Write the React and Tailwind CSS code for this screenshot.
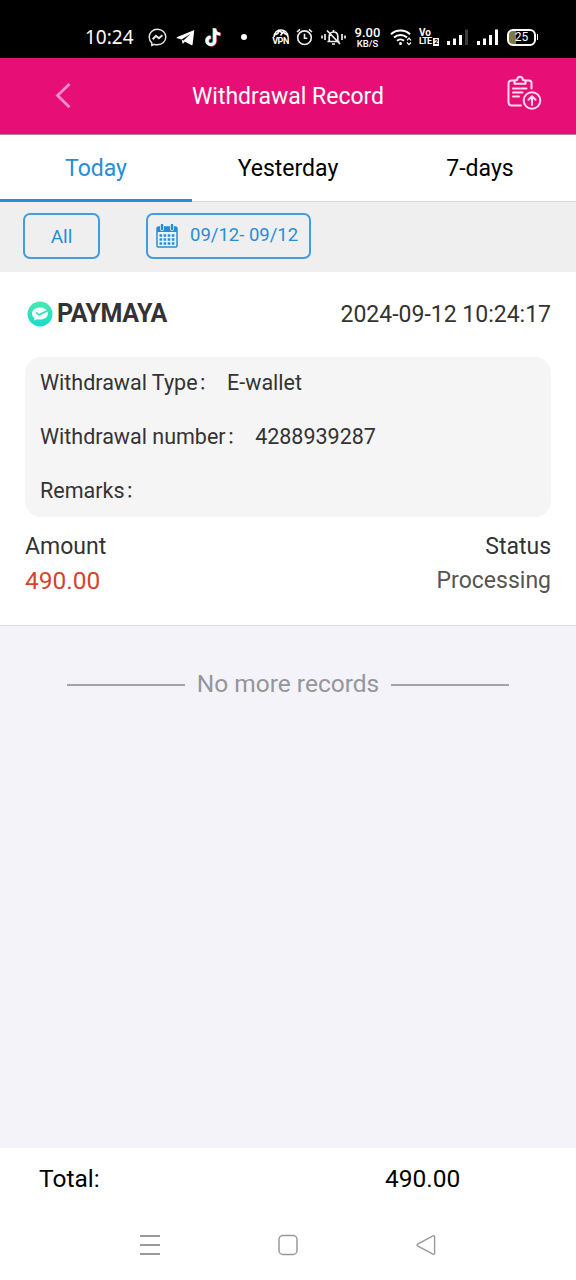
import React from "react";

const tabs = ["Today", "Yesterday", "7-days"];

const details = [
  { label: "Withdrawal Type", value: "E-wallet" },
  { label: "Withdrawal number", value: "4288939287" },
  { label: "Remarks", value: "" },
];

const MessengerIcon = () => (
  <svg className="ml-[14px] h-[19px] w-[19px]" viewBox="0 0 19 19" fill="none" stroke="#e8e8e8">
    <path d="M9.5 1.2c-4.700 0-8.300 3.400-8.300 7.900 0 2.400 1 4.400 2.600 5.800v2.600l2.500-1.200c1 .3 2 .5 3.200.5 4.700 0 8.300-3.300 8.300-7.700S14.200 1.200 9.500 1.200z" strokeWidth="1.400" />
    <path d="M4.700 11.300l3.300-3.400 2.900 2.400 3.500-3" strokeWidth="2" />
  </svg>
);

const TelegramIcon = () => (
  <svg className="ml-[9px] h-[17px] w-[19px]" viewBox="0 0 19 17" fill="#fff">
    <path d="M18.300 1L1.300 8c-.9.4-.8 1 0 1.300l4.200 1.300 9-5.600-7.300 6.800 8 4.300c.7.300 1.200.1 1.400-.7z" />
    <path d="M5.800 10.500l.9 4.500 2.300-2.300z" />
  </svg>
);

const TiktokIcon = () => (
  <svg className="ml-[9px] h-[20px] w-[18px]" viewBox="0 0 18 20" fill="none" strokeWidth="3">
    <path d="M10 1v12.500a3.800 3.800 0 1 1-4-3.800M10 2c.5 3 2.500 4.500 5.500 4.700" stroke="#4fd8d2" />
    <path d="M11.400 1.800v12.500a3.800 3.800 0 1 1-4-3.800M11.400 2.800c.5 3 2.500 4.500 5.500 4.700" stroke="#ee3b60" />
    <path d="M10.700 1.400v12.500a3.800 3.800 0 1 1-4-3.800M10.700 2.400c.5 3 2.500 4.500 5.500 4.700" stroke="#fff" />
  </svg>
);

const VpnIcon = () => (
  <span className="ml-[25px] flex w-[17px] flex-col items-center">
    <svg className="h-[8px] w-[16px]" viewBox="0 0 16 8" fill="none" stroke="#fff" strokeWidth="1.600">
      <path d="M1 8C1.500 4 4 1 8 1s6.500 3 7 7" />
      <path d="M2 5.500C4 5.500 5.500 4 6 1.500L9.500 4 7.500 6.500M10 2l1.500 2.500L14.500 6" />
    </svg>
    <span className="text-[9px] leading-[9px] font-bold tracking-[-0.5px]">VPN</span>
  </span>
);

const AlarmIcon = () => (
  <svg className="ml-[7px] h-[18px] w-[17px]" viewBox="0 0 17 18" fill="none" stroke="#eee" strokeWidth="1.600">
    <circle cx="8.500" cy="9.700" r="6.800" />
    <path d="M8.500 5.700v4.500h2.800M1 4l3-2.600M16 4l-3-2.600" />
  </svg>
);

const MuteIcon = () => (
  <svg className="ml-[8px] h-[18px] w-[25px]" viewBox="0 0 25 18" fill="none" stroke="#eee" strokeWidth="1.700">
    <path d="M6.500 13.500h12M8.200 13V8.500c0-2.600 1.600-4.500 4.300-4.500s4.300 1.900 4.300 4.500V13M12.500 2v2M11 16h3M6 2.500l13 13.500" />
    <path d="M1 7.500v3M4 6v6M24 7.500v3M21 6v6" />
  </svg>
);

const WifiIcon = () => (
  <svg className="ml-[9px] h-[18px] w-[22px]" viewBox="0 0 22 18" fill="none" stroke="#fff">
    <path d="M1 6.200c5.200-5 13.800-5 19 0M4 9.600c3.700-3.500 9.300-3.500 13 0M7 12.800c2-1.800 5-1.800 7 0" strokeWidth="2.100" />
    <circle cx="10.500" cy="15.500" r="1.500" fill="#fff" stroke="none" />
    <path d="M17 12.300l2-2.200 2 2.200M17 14.500l2 2.200 2-2.200" strokeWidth="1.200" />
  </svg>
);

const SignalBars = ({ className, last }) => (
  <svg className={className} viewBox="0 0 22 17" fill="#fff">
    <rect x="0" y="12" width="3" height="4" />
    <rect x="6" y="9.500" width="3" height="6.500" />
    <rect x="12" y="6" width="3" height="10" />
    <rect x="18" y="0.500" width="3" height="15.500" fill={last} />
  </svg>
);

const StatusBar = () => (
  <div className="flex h-[58px] items-center bg-black pt-[16px] pl-[85px] text-white">
    <span className="w-[49px] font-['Noto_Sans'] text-[19px] leading-[20px] whitespace-nowrap">10:24</span>
    <MessengerIcon />
    <TelegramIcon />
    <TiktokIcon />
    <span className="ml-[19px] h-[6px] w-[6px] rounded-full bg-white" />
    <VpnIcon />
    <AlarmIcon />
    <MuteIcon />
    <span className="ml-[8px] flex w-[27px] flex-col items-center whitespace-nowrap">
      <span className="text-[13px] leading-[12px] font-medium">9.00</span>
      <span className="text-[9.500px] leading-[9px] font-medium">KB/S</span>
    </span>
    <WifiIcon />
    <span className="ml-[7px] flex w-[20px] flex-col font-bold">
      <span className="text-[10px] leading-[9px]">Vo</span>
      <span className="flex items-center text-[9px] leading-[9px] tracking-[-0.7px]">
        LTE
        <span className="ml-[1.500px] h-[8px] w-[6px] bg-white text-center text-[7px] leading-[8px] text-black">2</span>
      </span>
    </span>
    <SignalBars className="ml-[8px] h-[17px] w-[22px]" last="#3c3c3c" />
    <SignalBars className="ml-[8px] h-[17px] w-[22px]" last="#fff" />
    <span className="ml-[8px] flex h-[17px] w-[29px] items-center justify-center rounded-[6px] border-2 border-white bg-linear-to-r from-[#7d774a] from-28% to-black to-28% text-[12px] leading-none">
      25
    </span>
    <span className="ml-px h-[6px] w-[1px] bg-white" />
  </div>
);

const Header = () => (
  <div className="flex h-[77px] items-center border-b border-[#b07fae] bg-[#e70f76] text-white">
    <div className="flex w-[120px] pl-[54px]">
      <svg className="h-[26px] w-[18px]" viewBox="0 0 18 26" fill="none" stroke="#fb8ccc" strokeWidth="2.800">
        <path d="M15.500 1L3.500 12.500l12 11.700" />
      </svg>
    </div>
    <h1 className="flex-1 pt-[2px] text-center text-[23px]">Withdrawal Record</h1>
    <div className="flex w-[120px] justify-end pr-[34px] pb-[7px]">
      <svg className="h-[35px] w-[36px]" viewBox="0 0 36 35" fill="none" stroke="#ffdcf0" strokeWidth="2" strokeLinecap="round" strokeLinejoin="round">
        <path d="M15 30.500H5.500a3 3 0 0 1-3-3V8.500a3 3 0 0 1 3-3h3M19.500 5.500h3.500a2.500 2.500 0 0 1 2.500 2.500v5.500" />
        <path d="M8.500 8.800V7c0-1.300.7-2 2-2h.6c.2-2 1.200-3.200 2.900-3.200s2.700 1.200 2.900 3.200h.6c1.300 0 2 .7 2 2v1.800z" />
        <path d="M7 13.500h13.500M7 17.500h9.500M7 21.500h6" />
        <circle cx="26" cy="25.500" r="8.300" />
        <path d="M26 30v-8.500M22.500 24.800l3.500-3.500 3.500 3.500" />
      </svg>
    </div>
  </div>
);

const CalendarIcon = () => (
  <svg className="h-[24px] w-[22px]" viewBox="0 0 22 24">
    <path d="M1 4.500a1.500 1.500 0 0 1 1.500-1.500h17A1.500 1.500 0 0 1 21 4.500V22a1 1 0 0 1-1 1H2a1 1 0 0 1-1-1z" fill="#eef5fa" stroke="#278dd8" strokeWidth="1.500" />
    <path d="M1 4.500A1.500 1.500 0 0 1 2.500 3h17A1.500 1.500 0 0 1 21 4.500V8H1z" fill="#278dd8" />
    <path d="M6 1v4M16 1v4" stroke="#efefef" strokeWidth="4" strokeLinecap="round" />
    <path d="M6 1v4M16 1v4" stroke="#278dd8" strokeWidth="2.400" strokeLinecap="round" />
    <path d="M3.500 11.500h15M3.500 15.500h15M3.500 19.500h15" stroke="#278dd8" strokeWidth="2.500" strokeDasharray="2.600 1.500" />
  </svg>
);

const PaymayaLogo = () => (
  <svg className="h-[26px] w-[26px]" viewBox="0 0 26 26" fill="none">
    <defs>
      <linearGradient id="maya" x1="0" y1="0" x2="0" y2="1">
        <stop offset="0" stopColor="#48eab0" />
        <stop offset="1" stopColor="#1ad9cb" />
      </linearGradient>
    </defs>
    <circle cx="13" cy="13" r="12.500" fill="url(#maya)" />
    <path d="M13 6.500c-4.700 0-8 2.600-8 6 0 2 .9 3.500 2.500 4.600L7 19.500l3.500-1.200c5.700 1 10.500-1.500 10.500-5.800 0-3.400-3.300-6-8-6z" fill="#f2fffb" />
    <path d="M9 11.500l3 2.300 8.500-4" stroke="#2fdcb8" strokeWidth="1.500" />
  </svg>
);

const RecordCard = () => (
  <div className="h-[354px] border-b border-[#dddde0] bg-white px-[25px] pt-[28px] text-[#333]">
    <div className="flex h-[28px] items-center justify-between">
      <div className="flex items-center gap-[4px] pl-[2px]">
        <PaymayaLogo />
        <span className="text-[25px] font-bold tracking-[-0.4px]">PAYMAYA</span>
      </div>
      <span className="pt-[3px] text-[23px]">2024-09-12 10:24:17</span>
    </div>
    <div className="mt-[29px] h-[160px] rounded-[16px] bg-[#f5f5f5] px-[15px]">
      {details.map((item) => (
        <div key={item.label} className="flex h-[54px] items-center pb-[2px] text-[21.500px] leading-[26px] whitespace-nowrap">
          <span>{item.label}</span>
          <span className="w-[29.500px] pl-px text-[17px]">：</span>
          <span>{item.value}</span>
        </div>
      ))}
    </div>
    <div className="mt-[13px] flex justify-between text-[23px] leading-[34px]">
      <div>
        <p>Amount</p>
        <p className="text-[24.500px] text-[#d7432d]">490.00</p>
      </div>
      <div className="text-right">
        <p>Status</p>
        <p className="text-[#555]">Processing</p>
      </div>
    </div>
  </div>
);

const NavBar = () => (
  <div className="flex h-[70px] items-center justify-between bg-white px-[140px]">
    <svg className="h-[22px] w-[20px]" viewBox="0 0 20 22" stroke="#999" strokeWidth="1.800">
      <path d="M0 2h20M0 11h20M0 20h20" />
    </svg>
    <svg className="h-[22px] w-[20px]" viewBox="0 0 20 22" fill="none" stroke="#999" strokeWidth="1.500">
      <rect x="1" y="1.500" width="18" height="19" rx="4" />
    </svg>
    <svg className="h-[22px] w-[20px]" viewBox="0 0 20 22" fill="none" stroke="#999" strokeWidth="1.400" strokeLinejoin="round">
      <path d="M1.500 10.200L17 1.800q1.600-.6 1.600 1v16.400q0 1.600-1.600 1L1.500 11.800q-1-.8 0-1.600z" />
    </svg>
  </div>
);

const App = () => {
  return (
    <div className="flex h-[1280px] w-[576px] flex-col overflow-hidden bg-[#f3f3f9] font-['Roboto','Noto_Sans_CJK_SC',sans-serif]">
      <StatusBar />
      <Header />
      <div className="grid h-[67px] grid-cols-3 bg-white text-[23px]">
        {tabs.map((tab, i) => (
          <button
            key={tab}
            className={
              i === 0
                ? "border-b-[3px] border-[#278dd8] pt-[4px] text-[#278dd8]"
                : "border-b border-[#d8d8d8] pt-[2px] text-black"
            }
          >
            {tab}
          </button>
        ))}
      </div>
      <div className="flex h-[70px] items-center gap-[46px] bg-[#efefef] pb-[3px] pl-[23px] text-[#278dd8]">
        <button className="h-[46px] w-[77px] rounded-[7px] border-2 border-[#278dd8]/85 pt-[3px] text-[19px]">All</button>
        <button className="flex h-[46px] w-[165px] items-center gap-[12px] rounded-[7px] border-2 border-[#278dd8]/85 pl-[8px] text-[18.500px] whitespace-nowrap">
          <CalendarIcon />
          <span>09/12- 09/12</span>
        </button>
      </div>
      <RecordCard />
      <div className="flex flex-1 items-start justify-center gap-[12px] pt-[39px] text-[24.500px] leading-[37px] text-[#969699]">
        <span className="mt-[19px] h-[2px] w-[118px] bg-[#a4a4a8]" />
        <span>No more records</span>
        <span className="mt-[19px] h-[2px] w-[118px] bg-[#a4a4a8]" />
      </div>
      <div className="flex h-[62px] items-center bg-white pl-[39px] text-[24.500px] text-black">
        <span className="w-[346px]">Total:</span>
        <span>490.00</span>
      </div>
      <NavBar />
    </div>
  );
};

export default App;
